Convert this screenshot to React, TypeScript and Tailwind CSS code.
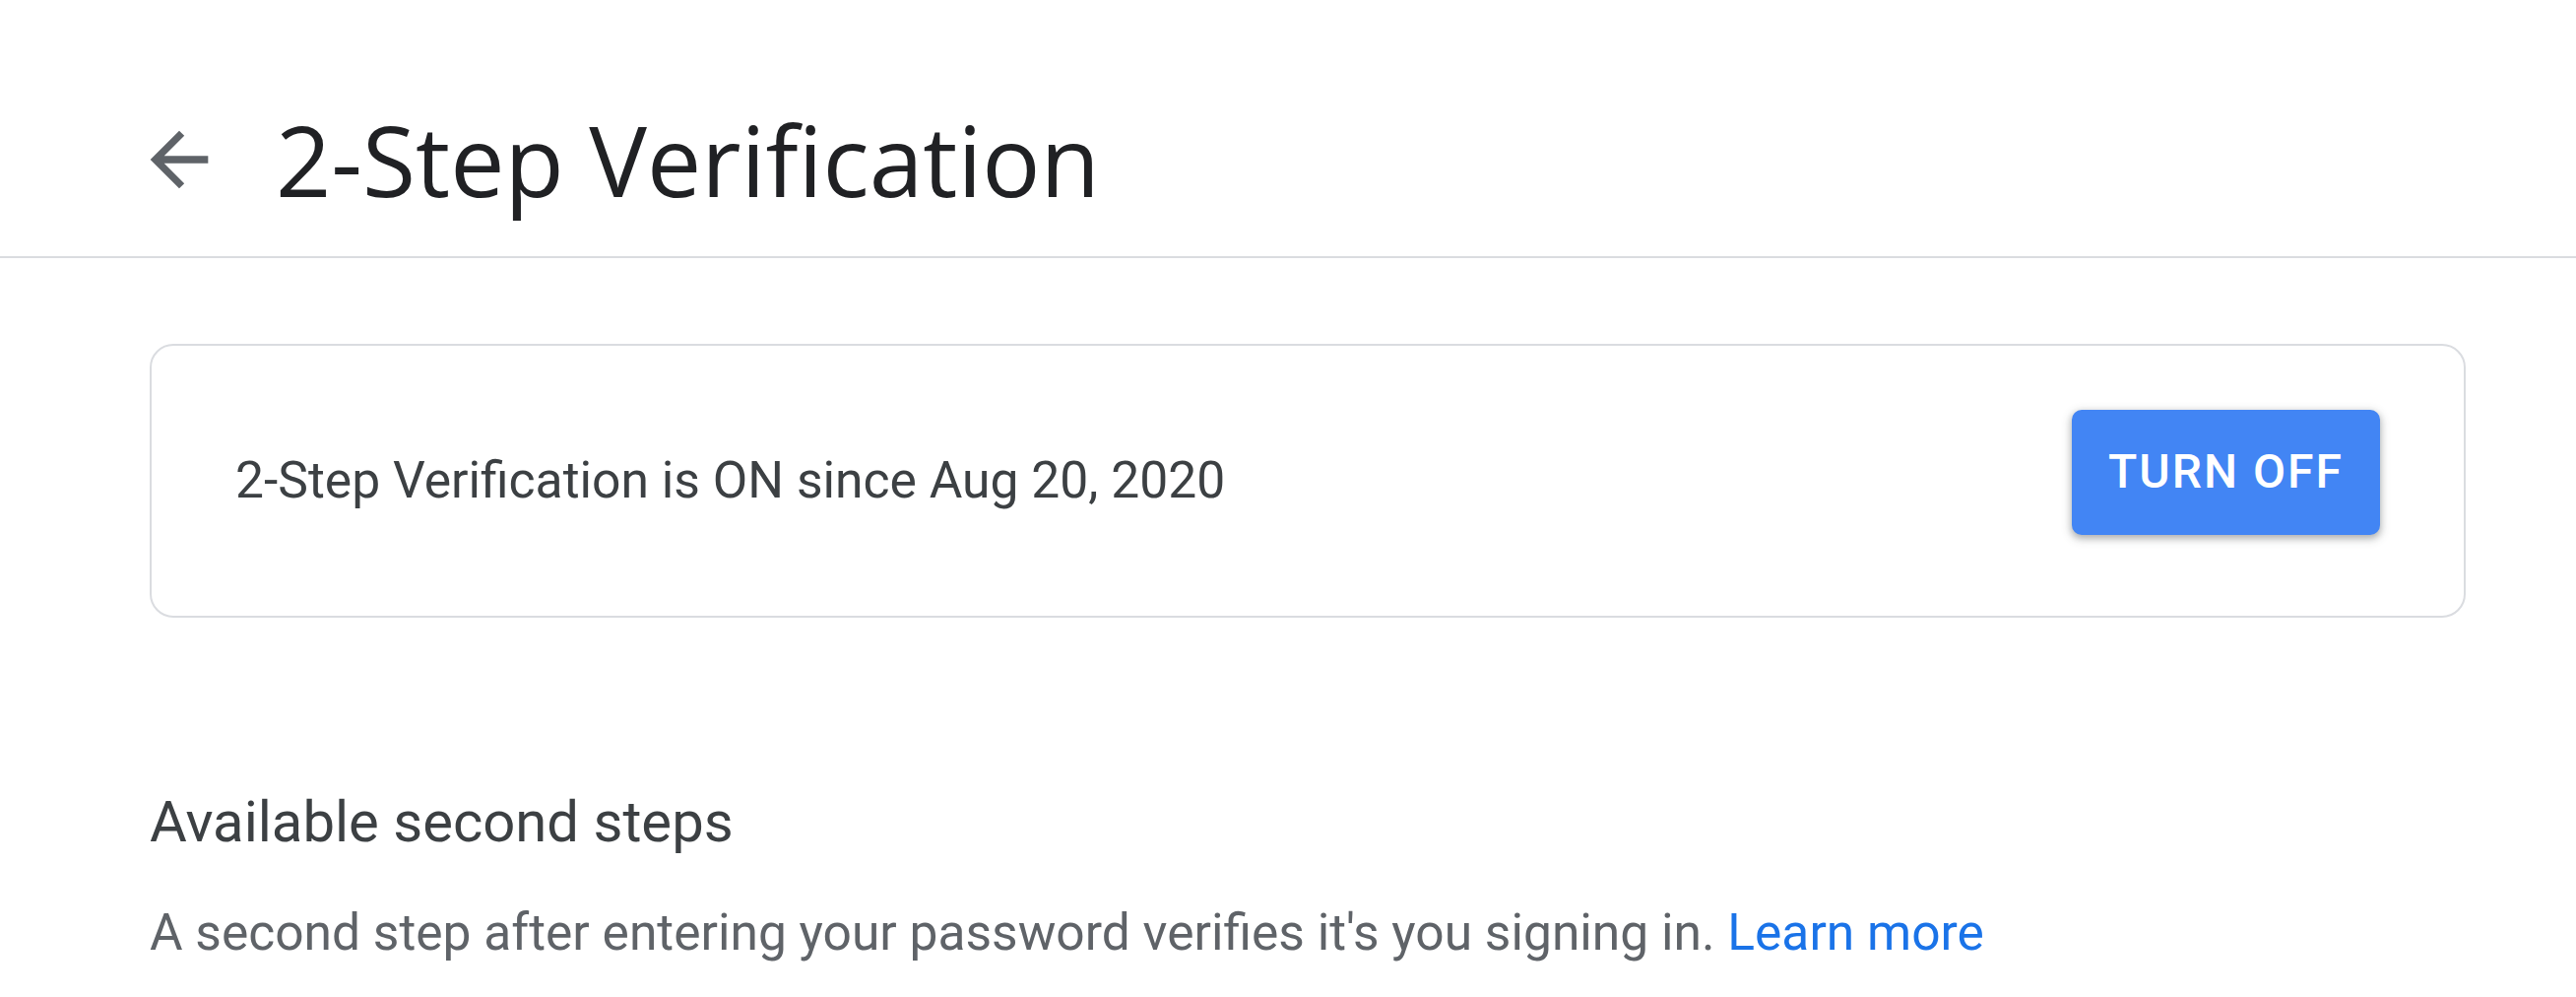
import React from 'react';

function BackArrow() {
  return (
    <svg viewBox="0 0 24 24" className="w-[88px] h-[88px] shrink-0" fill="#5f6368">
      <path d="M20 11H7.83l5.59-5.59L12 4l-8 8 8 8 1.41-1.41L7.83 13H20v-2z" />
    </svg>
  );
}

export default function App() {
  return (
    <div className="min-h-screen w-full bg-white font-['Roboto',sans-serif]">
      {/* header */}
      <div className="flex items-center pl-[138px] pt-[113px] pb-[49px] border-b-2 border-[#dadce0]">
        <BackArrow />
        <h1 className="ml-[54px] text-[98.5px] leading-[98px] font-normal text-[#202124] font-['Open_Sans',sans-serif]">
          2-Step Verification
        </h1>
      </div>

      <div className="pl-[152px] pr-[112px] pt-[87px]">
        {/* status card */}
        <div className="h-[278px] flex items-center justify-between px-[85px] border-2 border-[#dadce0] rounded-[24px]">
          <span className="text-[51.6px] text-[#3c4043]">2-Step Verification is ON since Aug 20, 2020</span>
          <button className="w-[313px] h-[127px] mb-[18px] rounded-[10px] bg-[#4285f4] text-white text-[48px] font-medium tracking-[2px] shadow-[0_3px_6px_rgba(60,64,67,0.3),0_3px_9px_3px_rgba(60,64,67,0.15)]">
            TURN OFF
          </button>
        </div>

        {/* second steps */}
        <h2 className="mt-[169px] text-[58px] leading-[77px] font-normal text-[#3c4043]">Available second steps</h2>
        <p className="mt-[35px] text-[51.5px] leading-[77px] text-[#5f6368]">
          A second step after entering your password verifies it's you signing in.{' '}
          <a className="text-[#1a73e8]">Learn more</a>
        </p>
      </div>
    </div>
  );
}
